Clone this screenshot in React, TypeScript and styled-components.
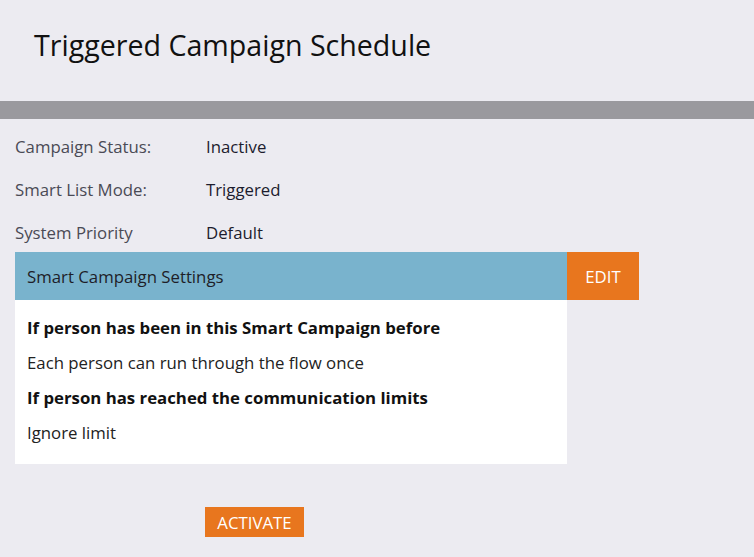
import React from "react";
import styled, { createGlobalStyle } from "styled-components";

const Global = createGlobalStyle`
  html, body { margin: 0; padding: 0; background: #ecebf1; }
  body { font-family: "Open Sans", "Noto Sans", sans-serif; }
`;

const Page = styled.div`
  width: 754px;
  height: 557px;
  background: #ecebf1;
  display: flex;
  flex-direction: column;
`;

const Header = styled.header`
  height: 101px;
  display: flex;
  align-items: flex-start;
  padding: 0 0 0 34px;
  box-sizing: border-box;
`;

const Title = styled.h1`
  margin: 25px 0 0 0;
  font-size: 28.6px;
  font-weight: 400;
  color: #111;
  line-height: 40px;
`;

const Divider = styled.div`
  height: 18px;
  background: #9a999e;
`;

const Content = styled.div`
  padding: 6px 0 0 15px;
  display: flex;
  flex-direction: column;
`;

const InfoRow = styled.div`
  display: grid;
  grid-template-columns: 191px auto;
  height: 43px;
  align-items: center;
  font-size: 16.8px;
`;

const Label = styled.span`
  color: #4a4a55;
`;

const Value = styled.span`
  color: #1c1c2e;
`;

const Panel = styled.div`
  display: grid;
  grid-template-columns: 552px 72px;
  grid-template-rows: 48px auto;
  margin-top: -2px;
`;

const PanelHeader = styled.div`
  background: #79b3cd;
  display: flex;
  align-items: center;
  padding-left: 12px;
  font-size: 16.8px;
  color: #1e1e28;
`;

const OrangeButton = styled.button<{ $w?: number; $h?: number }>`
  background: #e8761e;
  border: none;
  color: #fff;
  font-family: "Open Sans", "Noto Sans", sans-serif;
  font-size: 16.8px;
  text-transform: uppercase;
  padding: 0;
  cursor: pointer;
  width: ${(p) => (p.$w ? `${p.$w}px` : "auto")};
  height: ${(p) => (p.$h ? `${p.$h}px` : "auto")};
`;

const PanelBody = styled.div`
  background: #fff;
  padding: 10px 12px 14px 12px;
  display: flex;
  flex-direction: column;
`;

const Heading = styled.div`
  font-size: 16.8px;
  font-weight: 700;
  color: #111;
  height: 35px;
  display: flex;
  align-items: center;
`;

const Text = styled.div`
  font-size: 16.8px;
  color: #222;
  height: 35px;
  display: flex;
  align-items: center;
`;

const Footer = styled.div`
  padding: 43px 0 0 205px;
`;

export default function App() {
  return (
    <Page>
      <Global />
      <Header>
        <Title>Triggered Campaign Schedule</Title>
      </Header>
      <Divider />
      <Content>
        <InfoRow>
          <Label>Campaign Status:</Label>
          <Value>Inactive</Value>
        </InfoRow>
        <InfoRow>
          <Label>Smart List Mode:</Label>
          <Value>Triggered</Value>
        </InfoRow>
        <InfoRow>
          <Label>System Priority</Label>
          <Value>Default</Value>
        </InfoRow>
        <Panel>
          <PanelHeader>Smart Campaign Settings</PanelHeader>
          <OrangeButton $w={72} $h={48}>Edit</OrangeButton>
          <PanelBody>
            <Heading>If person has been in this Smart Campaign before</Heading>
            <Text>Each person can run through the flow once</Text>
            <Heading>If person has reached the communication limits</Heading>
            <Text>Ignore limit</Text>
          </PanelBody>
        </Panel>
      </Content>
      <Footer>
        <OrangeButton $w={99} $h={30}>Activate</OrangeButton>
      </Footer>
    </Page>
  );
}
